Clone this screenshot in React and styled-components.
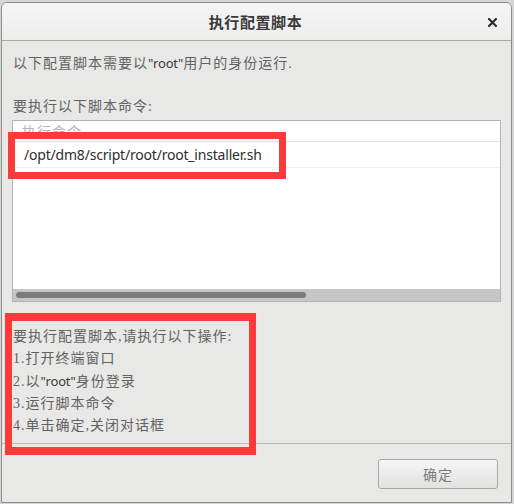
import React from "react";
import styled, { createGlobalStyle } from "styled-components";

const Global = createGlobalStyle`
  html, body { margin: 0; padding: 0; }
  body {
    background: #d6d6d6;
    width: 514px;
    height: 504px;
    overflow: hidden;
    font-family: "Liberation Serif", "Noto Sans CJK SC", serif;
  }
`;

const Page = styled.div`
  position: relative;
  width: 514px;
  height: 504px;
  padding: 2px 2px 0 1px;
  box-sizing: border-box;
`;

const Window = styled.div`
  width: 511px;
  height: 501px;
  box-sizing: border-box;
  border: 1px solid #8c8c8c;
  border-radius: 6px 6px 0 0;
  background: #e8e8e7;
  display: flex;
  flex-direction: column;
  overflow: hidden;
`;

const TitleBar = styled.div`
  height: 37px;
  flex: none;
  border-bottom: 1px solid #a9a9a9;
  background: linear-gradient(#f6f6f6, #ededec);
  display: flex;
  align-items: center;
  justify-content: center;
  position: relative;
`;

const Title = styled.div`
  font-family: "Noto Sans CJK SC", sans-serif;
  font-size: 15px;
  font-weight: 700;
  letter-spacing: 0.6px;
  color: #3a3a3a;
  margin-left: -2px;
`;

const CloseButton = styled.div`
  position: absolute;
  right: 14px;
  top: 15px;
  width: 9px;
  height: 9px;
  display: flex;
`;

const Content = styled.div`
  flex: 1;
  display: flex;
  flex-direction: column;
  padding: 11px 10px 0 10px;
`;

const Line = styled.div`
  font-size: 14px;
  letter-spacing: 1px;
  line-height: 22px;
  color: #626262;
  padding-left: ${(p) => p.$indent || 1}px;
  margin-top: ${(p) => p.$top || 0}px;
  white-space: nowrap;
`;

const Latin = styled.span`
  font-family: "Noto Sans", sans-serif;
  font-size: 13px;
  letter-spacing: -0.2px;
  color: #3a3a3a;
`;

const TableBox = styled.div`
  margin-top: 2px;
  height: 182px;
  box-sizing: border-box;
  border: 1px solid #b3b3b3;
  background: #ffffff;
  display: flex;
  flex-direction: column;
`;

const HeaderRow = styled.div`
  height: 20px;
  flex: none;
  border-bottom: 1px solid #e2e2e2;
  display: flex;
  align-items: center;
  padding-left: 9px;
  font-size: 14px;
  letter-spacing: 1px;
  color: #b4b4b4;
`;

const DataRow = styled.div`
  height: 25px;
  flex: none;
  border-bottom: 1px solid #f2f2f2;
  display: flex;
  align-items: center;
  padding-left: 11px;
  font-family: "Noto Sans", sans-serif;
  font-size: 14px;
  letter-spacing: -0.2px;
  color: #2e2e2e;
`;

const Spacer = styled.div`
  flex: 1;
`;

const ScrollTrack = styled.div`
  height: 12px;
  flex: none;
  background: #c6c6c6;
  display: flex;
  align-items: center;
  padding-left: 3px;
`;

const ScrollThumb = styled.div`
  width: 290px;
  height: 6px;
  border-radius: 3px;
  background: #7b7b7b;
`;

const Steps = styled.div`
  margin-top: 24px;
  display: flex;
  flex-direction: column;
`;

const Actions = styled.div`
  height: 59px;
  flex: none;
  border-top: 1px solid #b9b9b9;
  display: flex;
  justify-content: flex-end;
  align-items: flex-start;
  padding: 15px 13px 0 0;
  box-sizing: border-box;
`;

const Button = styled.div`
  width: 120px;
  height: 30px;
  box-sizing: border-box;
  border: 1px solid #a8a8a8;
  border-radius: 3px;
  background: linear-gradient(#f5f5f5, #e2e2e1);
  display: flex;
  align-items: center;
  justify-content: center;
  font-size: 14px;
  letter-spacing: 1px;
  color: #7c7c7c;
`;

const Highlight = styled.div`
  position: absolute;
  box-sizing: border-box;
  border: 7px solid #fc3a3a;
  pointer-events: none;
`;

export default function App() {
  return (
    <Page>
      <Global />
      <Window>
        <TitleBar>
          <Title>执行配置脚本</Title>
          <CloseButton>
            <svg width="9" height="9" viewBox="0 0 9 9">
              <path d="M1 1L8 8M8 1L1 8" stroke="#2e2e2e" strokeWidth="2.2" strokeLinecap="square" />
            </svg>
          </CloseButton>
        </TitleBar>
        <Content>
          <Line>
            以下配置脚本需要以<Latin>"root"</Latin>用户的身份运行.
          </Line>
          <Line $top={21}>要执行以下脚本命令:</Line>
          <TableBox>
            <HeaderRow>执行命令</HeaderRow>
            <DataRow>/opt/dm8/script/root/root_installer.sh</DataRow>
            <Spacer />
            <ScrollTrack>
              <ScrollThumb />
            </ScrollTrack>
          </TableBox>
          <Steps>
            <Line>要执行配置脚本,请执行以下操作:</Line>
            <Line>1.打开终端窗口</Line>
            <Line>
              2.以<Latin>"root"</Latin>身份登录
            </Line>
            <Line>3.运行脚本命令</Line>
            <Line>4.单击确定,关闭对话框</Line>
          </Steps>
        </Content>
        <Actions>
          <Button>确定</Button>
        </Actions>
      </Window>
      <Highlight style={{ left: 8, top: 132, width: 278, height: 47 }} />
      <Highlight style={{ left: 5, top: 313, width: 251, height: 142, borderWidth: "8px 7px" }} />
    </Page>
  );
}
